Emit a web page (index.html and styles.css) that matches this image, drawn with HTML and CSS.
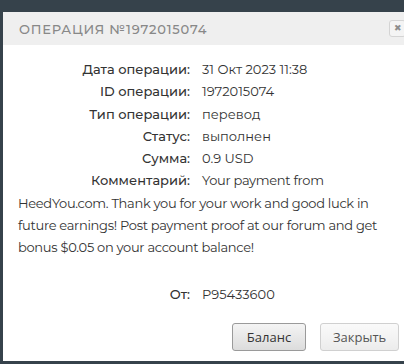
FILE: index.html
```html
<!DOCTYPE html>
<html lang="ru">
<head>
  <meta charset="UTF-8">
  <meta name="viewport" content="width=device-width, initial-scale=1.0">
  <title>Операция</title>
  <link rel="stylesheet" href="styles.css">
</head>
<body>
  <div class="dialog">
    <div class="dialog-head">
      <span class="dialog-title">Операция №1972015074</span>
      <button class="close-btn">&#10006;</button>
    </div>
    <div class="dialog-body">
      <div class="row"><span class="label">Дата операции:</span>31 Окт 2023 11:38</div>
      <div class="row"><span class="label">ID операции:</span>1972015074</div>
      <div class="row"><span class="label">Тип операции:</span>перевод</div>
      <div class="row"><span class="label">Статус:</span>выполнен</div>
      <div class="row"><span class="label">Сумма:</span>0.9 USD</div>
      <div class="row comment"><span class="label">Комментарий:</span>Your payment from<br>HeedYou.com. Thank you for your work and good luck in<br>future earnings! Post payment proof at our forum and get<br>bonus $0.05 on your account balance!</div>
      <div class="row from"><span class="label">От:</span>P95433600</div>
    </div>
    <div class="dialog-foot">
      <button class="btn btn-main">Баланс</button>
      <button class="btn">Закрыть</button>
    </div>
  </div>
</body>
</html>
```

FILE: styles.css
```css
body {
  margin: 0;
  background-color: #36424b;
  overflow: hidden;
  font-family: Montserrat, "Noto Sans", Arial, sans-serif;
}
.dialog {
  width: 430px;
  margin: 12px 0 0 3px;
  background-color: #fff;
}
.dialog-head {
  height: 33px;
  background-color: #efefef;
  display: flex;
  align-items: center;
  padding-left: 16px;
}
.dialog-title {
  color: #888;
  font-size: 13px;
  font-weight: 500;
  letter-spacing: 0.8px;
  text-transform: uppercase;
  flex: 1;
}
.close-btn {
  width: 17px;
  height: 17px;
  margin-right: 27px;
  padding: 0;
  border: 1px solid #d4d4d4;
  border-radius: 3px;
  background-color: #f4f4f4;
  color: #8d8d8d;
  font-size: 9px;
  line-height: 15px;
}
.dialog-body {
  padding: 13px 0 0 15px;
  color: #333;
  font-size: 13px;
  line-height: 22.3px;
}
.label {
  display: inline-block;
  width: 184px;
  padding-right: 12px;
  box-sizing: border-box;
  text-align: right;
  font-weight: 500;
  color: #333;
}
.comment {
  white-space: nowrap;
  letter-spacing: -0.3px;
}
.comment .label {
  letter-spacing: 0;
}
.from {
  margin-top: 24px;
}
.dialog-foot {
  display: flex;
  gap: 14px;
  padding: 18px 0 10px 229px;
}
.btn {
  height: 28px;
  padding: 0 12px;
  border: 1px solid #d0d0d0;
  border-radius: 3px;
  background: linear-gradient(#fafafa, #ececec);
  color: #555;
  font-family: "Open Sans", Arial, sans-serif;
  font-size: 13px;
}
.btn-main {
  width: 74px;
  border-color: #9a9a9a;
  background: linear-gradient(#f4f4f4, #dcdcdc);
  color: #333;
}
```
